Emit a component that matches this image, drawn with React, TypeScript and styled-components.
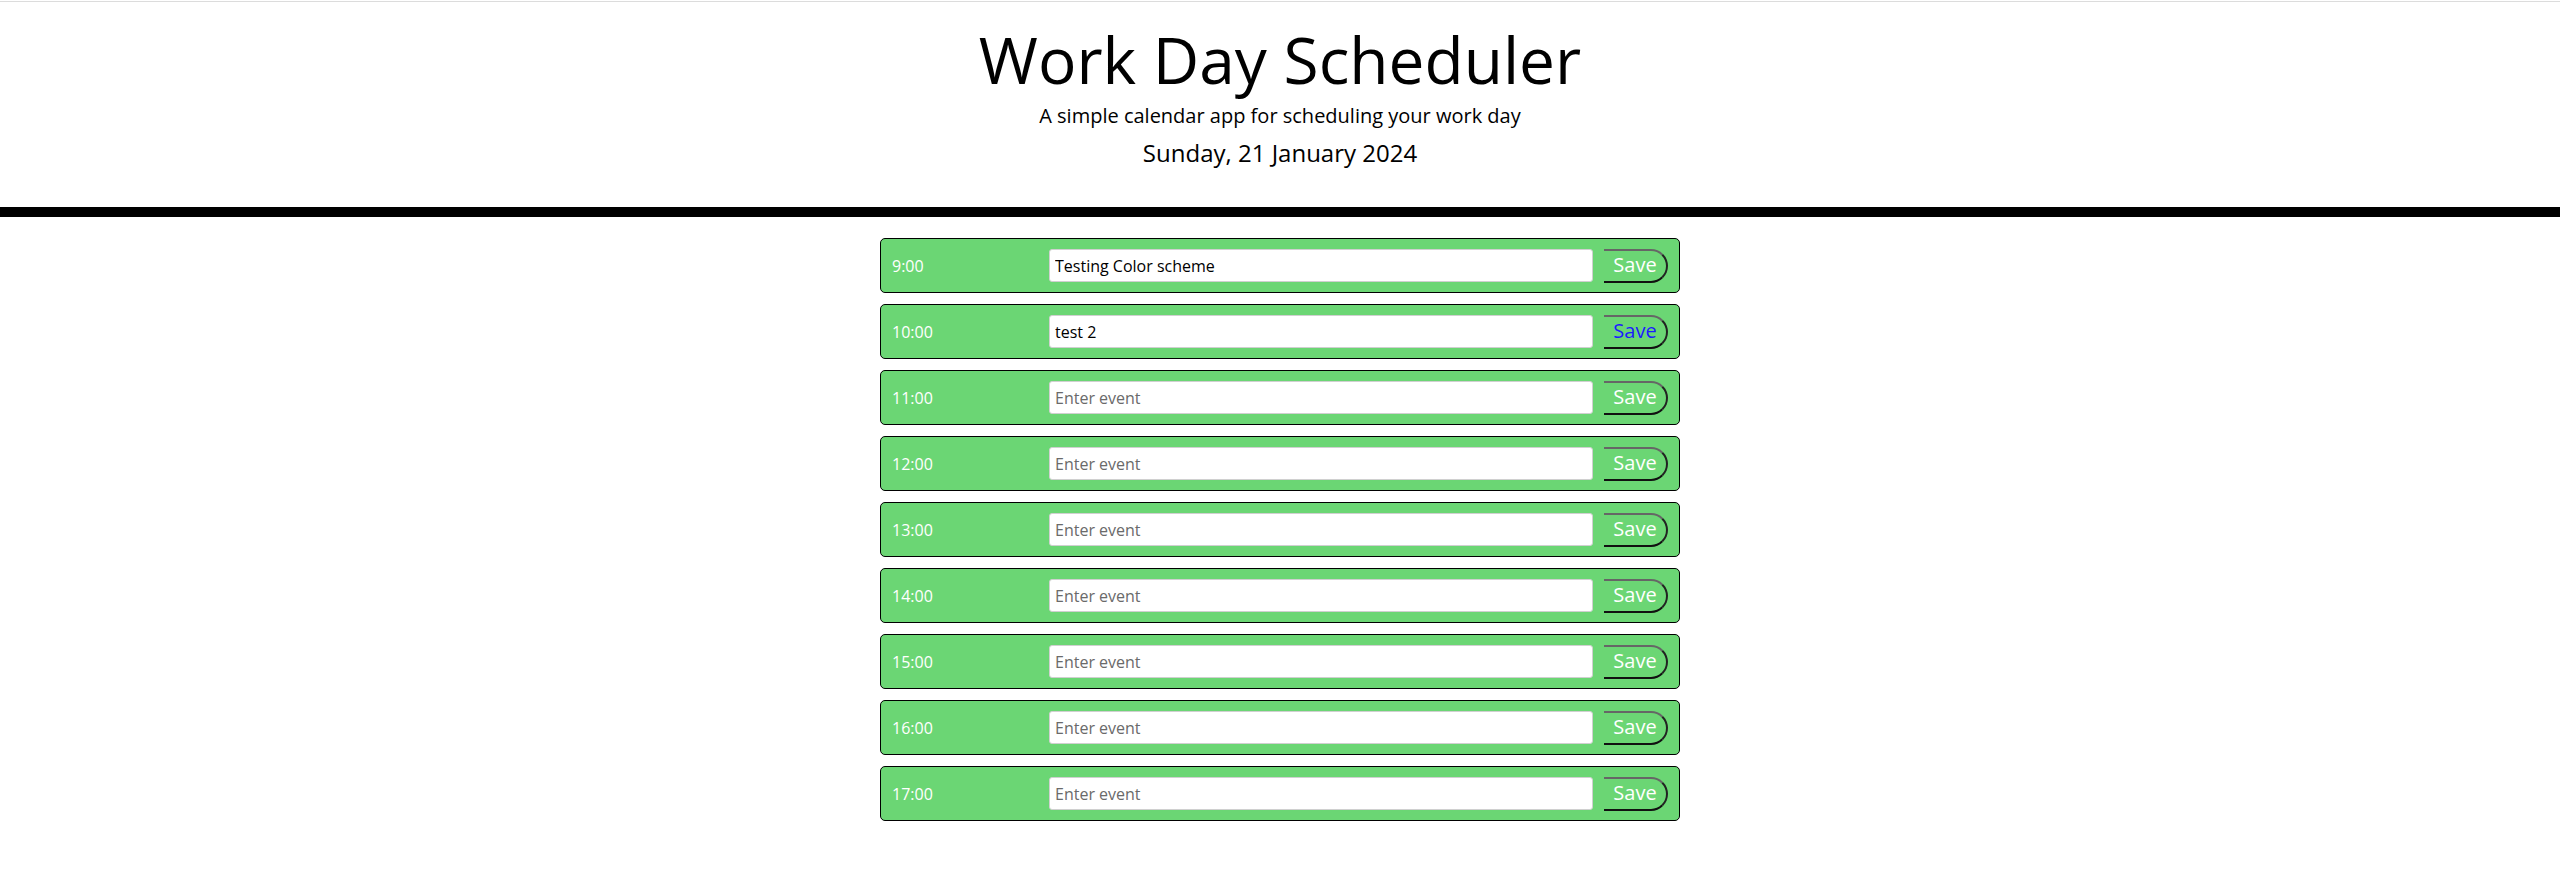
import React from "react";
import styled, { createGlobalStyle } from "styled-components";

const GlobalStyle = createGlobalStyle`
  html, body {
    margin: 0;
    padding: 0;
    background: #ffffff;
  }
  body {
    padding-top: 1px;
    font-family: "Open Sans", "Noto Sans", sans-serif;
    color: #000;
  }
`;

const Header = styled.header`
  border-top: 1px solid #dcdcdc;
  border-bottom: 10px solid #000;
  text-align: center;
  padding: 14px 0 38px;
`;

const Title = styled.h1`
  margin: 0;
  font-size: 64px;
  font-weight: 400;
  line-height: 88px;
`;

const Subtitle = styled.p`
  margin: 0;
  font-size: 20px;
  line-height: 24px;
`;

const CurrentDay = styled.p`
  margin: 9px 0 0;
  font-size: 24px;
  line-height: 32px;
`;

const Schedule = styled.main`
  display: flex;
  flex-direction: column;
  align-items: center;
  gap: 11px;
  padding-top: 21px;
`;

const Row = styled.div`
  box-sizing: border-box;
  width: 800px;
  height: 55px;
  display: flex;
  align-items: center;
  padding: 0 11px;
  background: #6bd674;
  border: 1px solid #000;
  border-radius: 5px;
`;

const Hour = styled.div`
  width: 157px;
  color: #fff;
  font-size: 16px;
`;

const EventInput = styled.input`
  box-sizing: border-box;
  width: 544px;
  height: 33px;
  padding: 0 5px;
  font-family: "Open Sans", "Noto Sans", sans-serif;
  font-size: 16px;
  color: #000;
  background: #fff;
  border: 1px solid #d0d0d0;
  border-radius: 3px;
  outline: none;

  &::placeholder {
    color: #6a6a6a;
  }
`;

const SaveButton = styled.button<{ $active?: boolean }>`
  box-sizing: border-box;
  margin-left: 11px;
  width: 64px;
  height: 34px;
  padding: 0 0 2px;
  background: transparent;
  color: ${(p) => (p.$active ? "#1b1bff" : "#fff")};
  font-family: "Open Sans", "Noto Sans", sans-serif;
  font-size: 20px;
  border-style: solid;
  border-width: 2px 2px 2px 0;
  border-top-color: #666;
  border-right-color: #222;
  border-bottom-color: #111;
  border-radius: 0 18px 18px 0;
  cursor: pointer;
`;

const hours = [9, 10, 11, 12, 13, 14, 15, 16, 17];
const saved: Record<number, string> = {
  9: "Testing Color scheme",
  10: "test 2",
};

export default function App() {
  return (
    <>
      <GlobalStyle />
      <Header>
        <Title>Work Day Scheduler</Title>
        <Subtitle>A simple calendar app for scheduling your work day</Subtitle>
        <CurrentDay>Sunday, 21 January 2024</CurrentDay>
      </Header>
      <Schedule>
        {hours.map((h) => (
          <Row key={h}>
            <Hour>{h}:00</Hour>
            <EventInput placeholder="Enter event" defaultValue={saved[h] ?? ""} />
            <SaveButton $active={h === 10}>Save</SaveButton>
          </Row>
        ))}
      </Schedule>
    </>
  );
}
